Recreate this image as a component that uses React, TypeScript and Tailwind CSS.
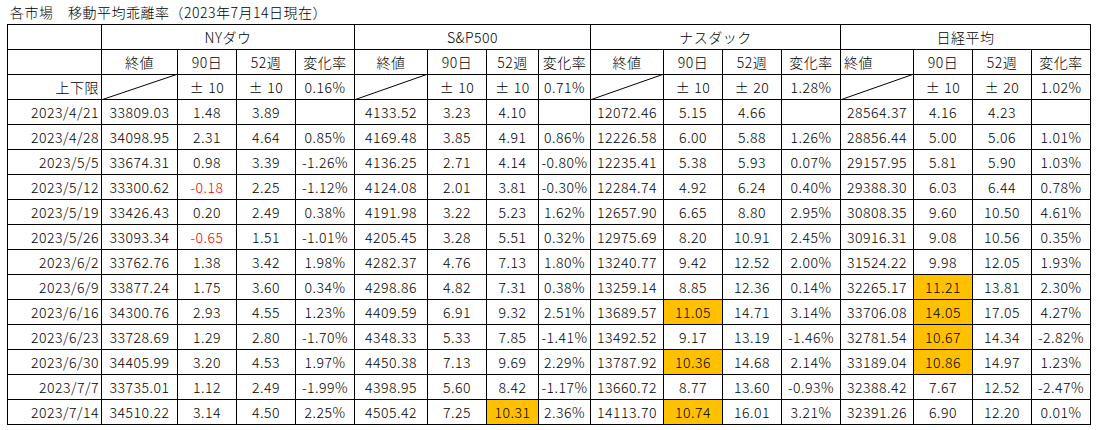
import React from "react";

type Cell = { v: string; red?: boolean; hl?: boolean };

const c = (v: string, opt: Partial<Cell> = {}): Cell => ({ v, ...opt });

const rows: { date: string; cells: Cell[] }[] = [
  { date: "2023/4/21", cells: [c("33809.03"), c("1.48"), c("3.89"), c(""), c("4133.52"), c("3.23"), c("4.10"), c(""), c("12072.46"), c("5.15"), c("4.66"), c(""), c("28564.37"), c("4.16"), c("4.23"), c("")] },
  { date: "2023/4/28", cells: [c("34098.95"), c("2.31"), c("4.64"), c("0.85%"), c("4169.48"), c("3.85"), c("4.91"), c("0.86%"), c("12226.58"), c("6.00"), c("5.88"), c("1.26%"), c("28856.44"), c("5.00"), c("5.06"), c("1.01%")] },
  { date: "2023/5/5", cells: [c("33674.31"), c("0.98"), c("3.39"), c("-1.26%"), c("4136.25"), c("2.71"), c("4.14"), c("-0.80%"), c("12235.41"), c("5.38"), c("5.93"), c("0.07%"), c("29157.95"), c("5.81"), c("5.90"), c("1.03%")] },
  { date: "2023/5/12", cells: [c("33300.62"), c("-0.18", { red: true }), c("2.25"), c("-1.12%"), c("4124.08"), c("2.01"), c("3.81"), c("-0.30%"), c("12284.74"), c("4.92"), c("6.24"), c("0.40%"), c("29388.30"), c("6.03"), c("6.44"), c("0.78%")] },
  { date: "2023/5/19", cells: [c("33426.43"), c("0.20"), c("2.49"), c("0.38%"), c("4191.98"), c("3.22"), c("5.23"), c("1.62%"), c("12657.90"), c("6.65"), c("8.80"), c("2.95%"), c("30808.35"), c("9.60"), c("10.50"), c("4.61%")] },
  { date: "2023/5/26", cells: [c("33093.34"), c("-0.65", { red: true }), c("1.51"), c("-1.01%"), c("4205.45"), c("3.28"), c("5.51"), c("0.32%"), c("12975.69"), c("8.20"), c("10.91"), c("2.45%"), c("30916.31"), c("9.08"), c("10.56"), c("0.35%")] },
  { date: "2023/6/2", cells: [c("33762.76"), c("1.38"), c("3.42"), c("1.98%"), c("4282.37"), c("4.76"), c("7.13"), c("1.80%"), c("13240.77"), c("9.42"), c("12.52"), c("2.00%"), c("31524.22"), c("9.98"), c("12.05"), c("1.93%")] },
  { date: "2023/6/9", cells: [c("33877.24"), c("1.75"), c("3.60"), c("0.34%"), c("4298.86"), c("4.82"), c("7.31"), c("0.38%"), c("13259.14"), c("8.85"), c("12.36"), c("0.14%"), c("32265.17"), c("11.21", { hl: true }), c("13.81"), c("2.30%")] },
  { date: "2023/6/16", cells: [c("34300.76"), c("2.93"), c("4.55"), c("1.23%"), c("4409.59"), c("6.91"), c("9.32"), c("2.51%"), c("13689.57"), c("11.05", { hl: true }), c("14.71"), c("3.14%"), c("33706.08"), c("14.05", { hl: true }), c("17.05"), c("4.27%")] },
  { date: "2023/6/23", cells: [c("33728.69"), c("1.29"), c("2.80"), c("-1.70%"), c("4348.33"), c("5.33"), c("7.85"), c("-1.41%"), c("13492.52"), c("9.17"), c("13.19"), c("-1.46%"), c("32781.54"), c("10.67", { hl: true }), c("14.34"), c("-2.82%")] },
  { date: "2023/6/30", cells: [c("34405.99"), c("3.20"), c("4.53"), c("1.97%"), c("4450.38"), c("7.13"), c("9.69"), c("2.29%"), c("13787.92"), c("10.36", { hl: true }), c("14.68"), c("2.14%"), c("33189.04"), c("10.86", { hl: true }), c("14.97"), c("1.23%")] },
  { date: "2023/7/7", cells: [c("33735.01"), c("1.12"), c("2.49"), c("-1.99%"), c("4398.95"), c("5.60"), c("8.42"), c("-1.17%"), c("13660.72"), c("8.77"), c("13.60"), c("-0.93%"), c("32388.42"), c("7.67"), c("12.52"), c("-2.47%")] },
  { date: "2023/7/14", cells: [c("34510.22"), c("3.14"), c("4.50"), c("2.25%"), c("4505.42"), c("7.25"), c("10.31", { hl: true }), c("2.36%"), c("14113.70"), c("10.74", { hl: true }), c("16.01"), c("3.21%"), c("32391.26"), c("6.90"), c("12.20"), c("0.01%")] },
];

const markets = ["NYダウ", "S&P500", "ナスダック", "日経平均"];
const limits = [
  ["10", "10", "0.16%"],
  ["10", "10", "0.71%"],
  ["10", "20", "1.28%"],
  ["10", "20", "1.02%"],
];

const base = "bg-white flex items-center justify-center whitespace-nowrap overflow-hidden";

function Diagonal() {
  return (
    <div className="bg-white relative">
      <svg className="absolute left-[-1px] top-[-1px] w-[calc(100%+2px)] h-[calc(100%+2px)]" preserveAspectRatio="none" viewBox="0 0 100 100">
        <line x1="0" y1="100" x2="100" y2="0" stroke="#000" strokeWidth="1" vectorEffect="non-scaling-stroke" />
      </svg>
    </div>
  );
}

function PM({ n }: { n: string }) {
  return (
    <div className={base}>
      <span className="mr-[4px]">±</span>
      <span>{n}</span>
    </div>
  );
}

export default function App() {
  return (
    <div
      className="w-[1097px] h-[430px] bg-white text-black text-[14px] font-light tracking-[0.5px]"
      style={{ fontFamily: '"Noto Sans CJK JP", "Noto Sans", sans-serif' }}
    >
      <div className="h-[24px] leading-[24px] pl-[10px] whitespace-nowrap">各市場　移動平均乖離率（2023年7月14日現在）</div>
      <div className="ml-[7px] w-[1084px] bg-black p-px gap-px grid grid-cols-[93px_75px_58px_58px_58px_72px_58px_51px_51px_72px_58px_58px_58px_72px_58px_58px_58px] auto-rows-[24px] leading-none">
        {/* header row 1 */}
        <div className="bg-white" />
        {markets.map((m) => (
          <div key={m} className={`${base} col-span-4`}>{m}</div>
        ))}
        {/* header row 2 */}
        <div className="bg-white" />
        {markets.map((m, i) => (
          <React.Fragment key={m}>
            <div className={i === 3 ? "bg-white flex items-center justify-start pl-[3px]" : base}>終値</div>
            <div className={base}>90日</div>
            <div className={base}>52週</div>
            <div className={base}>変化率</div>
          </React.Fragment>
        ))}
        {/* limits row */}
        <div className="bg-white flex items-center justify-end pr-[2px]">上下限</div>
        {limits.map((l, i) => (
          <React.Fragment key={i}>
            <Diagonal />
            <PM n={l[0]} />
            <PM n={l[1]} />
            <div className={base}>{l[2]}</div>
          </React.Fragment>
        ))}
        {/* data rows */}
        {rows.map((r) => (
          <React.Fragment key={r.date}>
            <div className="bg-white flex items-center justify-end pr-[2px]">{r.date}</div>
            {r.cells.map((cell, j) => (
              <div
                key={j}
                className={`flex items-center justify-center whitespace-nowrap overflow-hidden ${cell.hl ? "bg-[#ffc000]" : "bg-white"} ${cell.red ? "text-[#ff0000]" : ""}`}
              >
                {cell.v}
              </div>
            ))}
          </React.Fragment>
        ))}
      </div>
    </div>
  );
}
